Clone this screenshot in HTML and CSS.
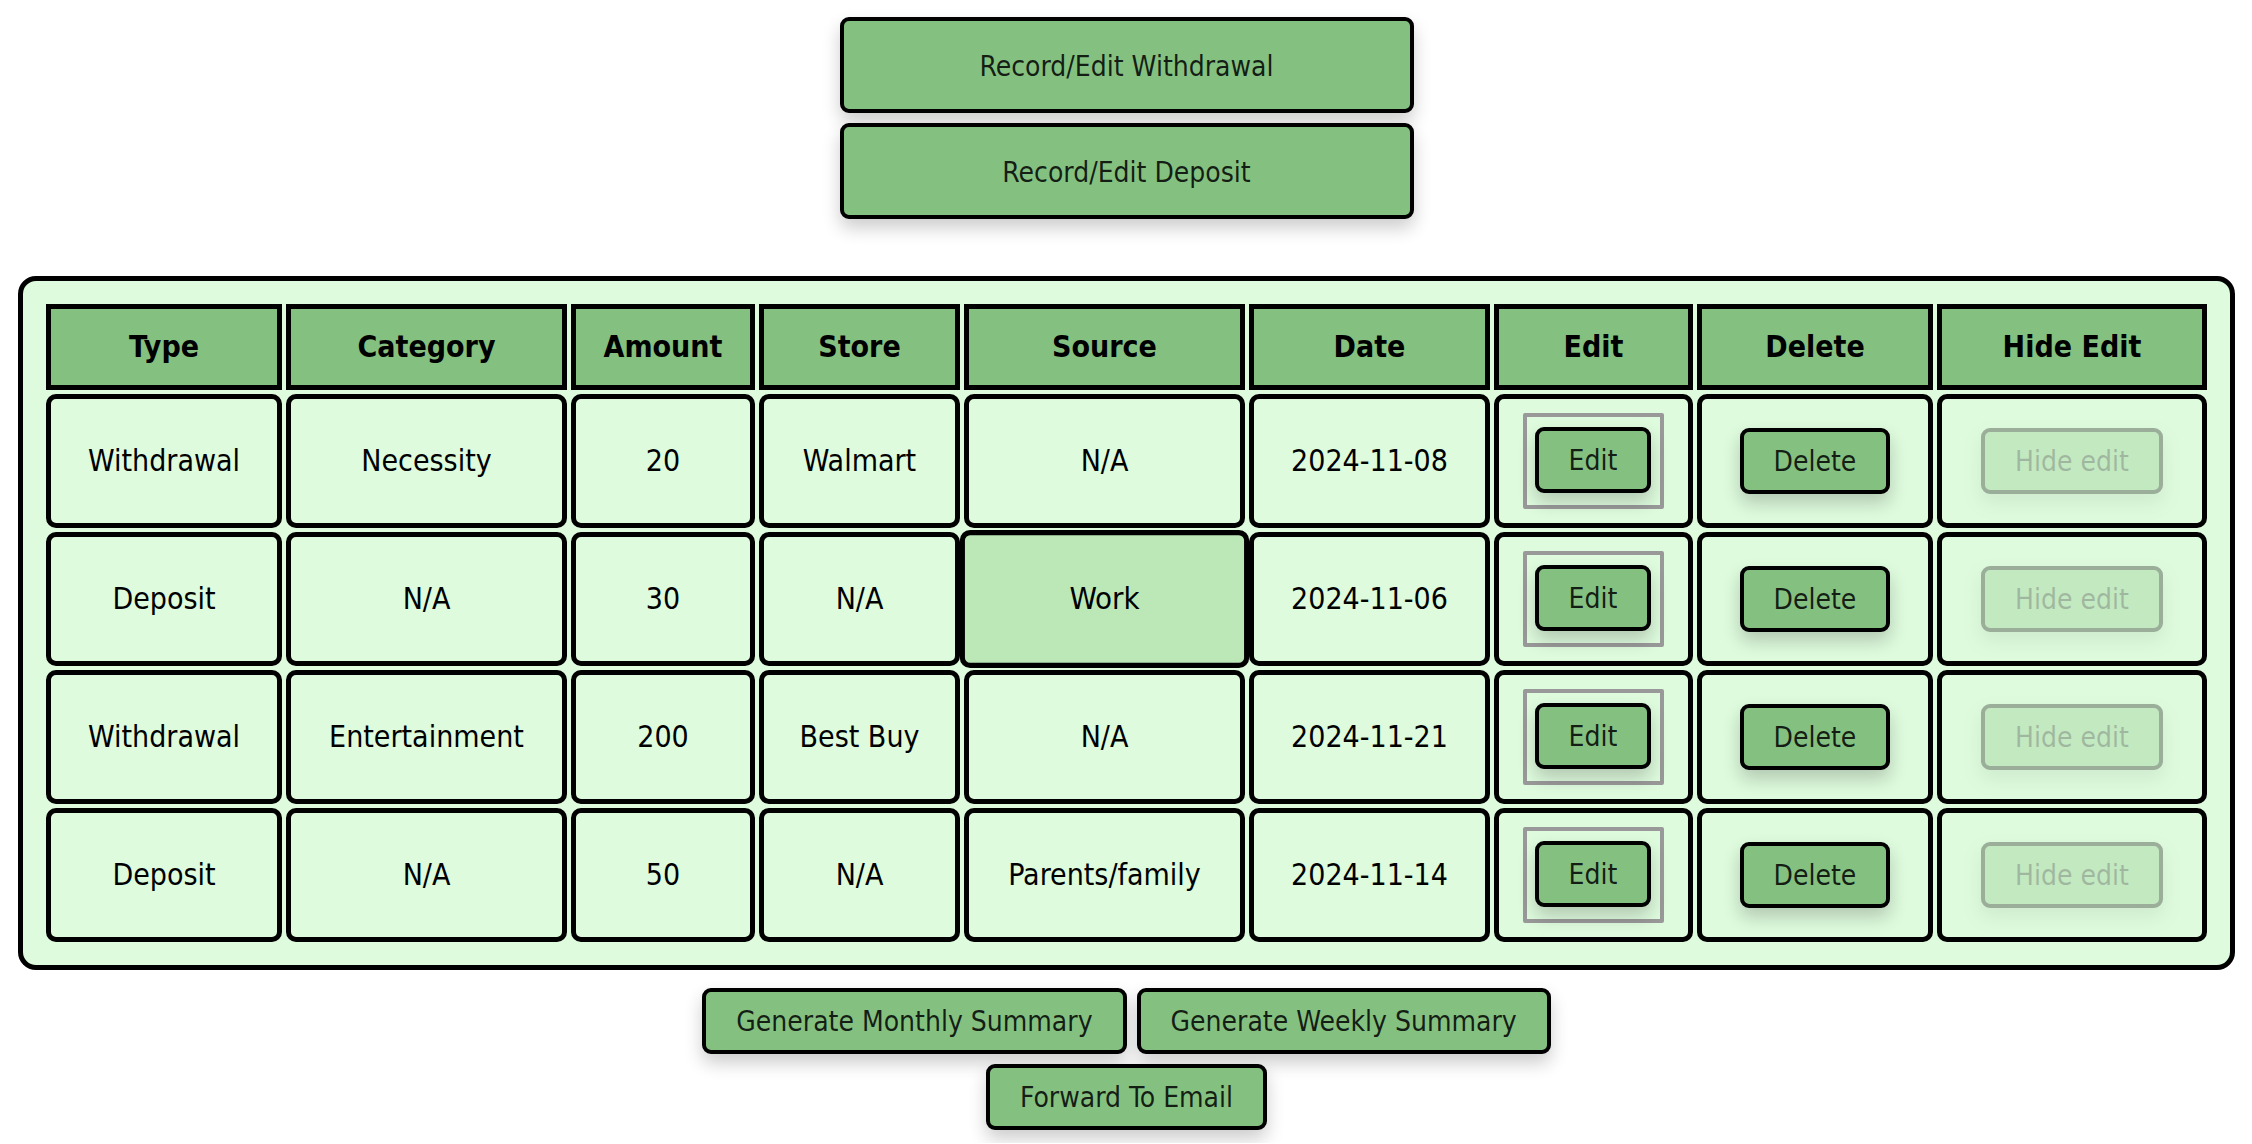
FILE: index.html
```html
<!DOCTYPE html>
<html lang="en">
<head>
<meta charset="utf-8">
<title>Transactions</title>
<link rel="stylesheet" href="styles.css">
</head>
<body>
<nav class="record-actions">
  <button type="button" class="btn btn-large">Record/Edit Withdrawal</button>
  <button type="button" class="btn btn-large">Record/Edit Deposit</button>
</nav>
<main class="panel">
  <table class="transactions">
    <colgroup>
      <col class="col-type"><col class="col-category"><col class="col-amount"><col class="col-store"><col class="col-source"><col class="col-date"><col class="col-edit"><col class="col-delete"><col class="col-hide">
    </colgroup>
    <thead>
      <tr><th>Type</th><th>Category</th><th>Amount</th><th>Store</th><th>Source</th><th>Date</th><th>Edit</th><th>Delete</th><th>Hide Edit</th></tr>
    </thead>
    <tbody>
      <tr>
        <td>Withdrawal</td><td>Necessity</td><td>20</td><td>Walmart</td><td>N/A</td><td>2024-11-08</td>
        <td><div class="edit-frame"><button type="button" class="btn">Edit</button></div></td>
        <td><button type="button" class="btn">Delete</button></td>
        <td><button type="button" class="btn" disabled>Hide edit</button></td>
      </tr>
      <tr>
        <td>Deposit</td><td>N/A</td><td>30</td><td>N/A</td><td class="active">Work</td><td>2024-11-06</td>
        <td><div class="edit-frame"><button type="button" class="btn">Edit</button></div></td>
        <td><button type="button" class="btn">Delete</button></td>
        <td><button type="button" class="btn" disabled>Hide edit</button></td>
      </tr>
      <tr>
        <td>Withdrawal</td><td>Entertainment</td><td>200</td><td>Best Buy</td><td>N/A</td><td>2024-11-21</td>
        <td><div class="edit-frame"><button type="button" class="btn">Edit</button></div></td>
        <td><button type="button" class="btn">Delete</button></td>
        <td><button type="button" class="btn" disabled>Hide edit</button></td>
      </tr>
      <tr>
        <td>Deposit</td><td>N/A</td><td>50</td><td>N/A</td><td>Parents/family</td><td>2024-11-14</td>
        <td><div class="edit-frame"><button type="button" class="btn">Edit</button></div></td>
        <td><button type="button" class="btn">Delete</button></td>
        <td><button type="button" class="btn" disabled>Hide edit</button></td>
      </tr>
    </tbody>
  </table>
</main>
<footer class="summary-actions">
  <div class="summary-row">
    <button type="button" class="btn">Generate Monthly Summary</button>
    <button type="button" class="btn">Generate Weekly Summary</button>
  </div>
  <button type="button" class="btn">Forward To Email</button>
</footer>
</body>
</html>
```
FILE: styles.css
```css
* { box-sizing: border-box; }

body {
  margin: 0;
  padding: 17px 17px 13px 18px;
  background: #fff;
  color: #000;
  font-family: Tahoma, "DejaVu Sans Condensed", "DejaVu Sans", sans-serif;
  font-stretch: condensed;
  font-size: 30px;
  line-height: 36px;
}

.record-actions,
.summary-actions {
  display: flex;
  flex-direction: column;
  align-items: center;
  gap: 10px;
}

.record-actions { margin-bottom: 57px; }
.summary-actions { margin-top: 18px; }

.summary-row {
  display: flex;
  gap: 10px;
}

.btn {
  padding: 12px 30px 10px;
  border: 4px solid #000;
  border-radius: 9px;
  background: #84c080;
  color: rgba(0, 0, 0, 0.85);
  font: inherit;
  font-size: 28px;
  white-space: nowrap;
  box-shadow: 0 9px 18px rgba(0, 0, 0, 0.2);
}

.btn:disabled { opacity: 0.3; }

.btn-large {
  width: 574px;
  padding: 28px 30px 24px;
}

.panel {
  padding: 19px;
  border: 5px solid #000;
  border-radius: 18px;
  background: #defbdd;
}

.transactions {
  width: 100%;
  table-layout: fixed;
  border-spacing: 4px;
}

.col-type { width: 236px; }
.col-category { width: 281px; }
.col-amount { width: 184px; }
.col-store { width: 201px; }
.col-source { width: 281px; }
.col-date { width: 241px; }
.col-edit { width: 199px; }
.col-delete { width: 236px; }
.col-hide { width: 270px; }

th {
  padding: 20px 0;
  border: 5px solid #000;
  background: #84c080;
  font-weight: bold;
}

td {
  height: 134px;
  padding: 0;
  border: 5px solid #000;
  border-radius: 10px;
  text-align: center;
  vertical-align: middle;
}

td.active {
  background: #bce8b8;
  transform: scale(1.03);
}

.edit-frame {
  display: flex;
  width: fit-content;
  margin: 0 auto;
  padding: 10px 9px 12px 8px;
  border: 4px solid #999;
  border-radius: 2px;
}
```
